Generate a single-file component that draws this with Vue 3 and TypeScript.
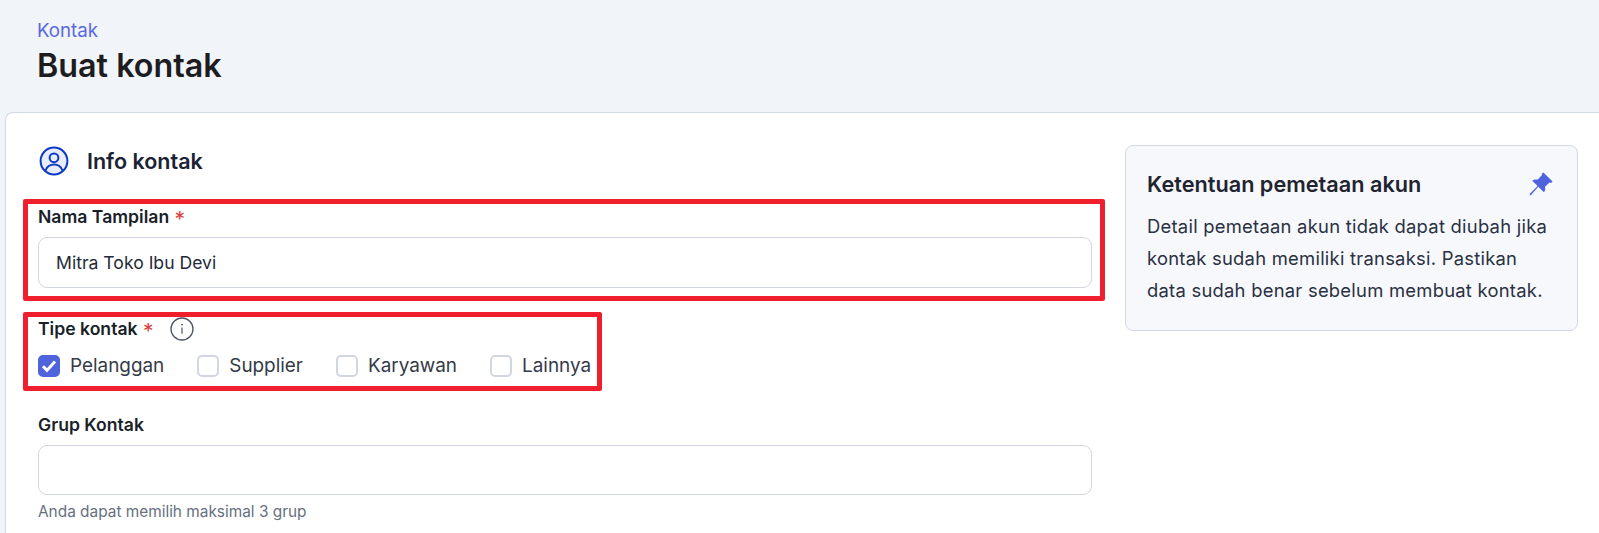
<script setup lang="ts">
const types = [
  { label: 'Pelanggan', checked: true },
  { label: 'Supplier', checked: false },
  { label: 'Karyawan', checked: false },
  { label: 'Lainnya', checked: false },
]
</script>

<template>
  <div class="page">
    <header class="head">
      <a class="crumb">Kontak</a>
      <h1 class="title">Buat kontak</h1>
    </header>
    <main class="card">
      <section class="form">
        <div class="section-head">
          <svg class="user-icon" width="30" height="30" viewBox="0 0 30 30" fill="none">
            <circle cx="15" cy="15" r="13.4" fill="#E9EDFB" stroke="#0B3BC4" stroke-width="2" />
            <circle cx="15" cy="11.8" r="4.4" stroke="#0B3BC4" stroke-width="2" />
            <path d="M6.4 24.6c1.6-4 4.8-6 8.6-6s7 2 8.6 6" stroke="#0B3BC4" stroke-width="2" />
          </svg>
          <h2 class="section-title">Info kontak</h2>
        </div>

        <div class="field field-name marked">
          <label class="label">Nama Tampilan <span class="req">*</span></label>
          <div class="input">Mitra Toko Ibu Devi</div>
        </div>

        <div class="field field-type marked marked-type">
          <div class="label type-label">
            <span class="type-text">Tipe kontak <span class="req">*</span></span>
            <svg width="24" height="24" viewBox="0 0 24 24" fill="none">
              <circle cx="12" cy="12" r="11" stroke="#4B5563" stroke-width="1.3" />
              <path d="M12 10.6v6.2" stroke="#4B5563" stroke-width="1.2" />
              <circle cx="12" cy="7.6" r="0.9" fill="#4B5563" />
            </svg>
          </div>
          <div class="checks">
            <div v-for="t in types" :key="t.label" class="check">
              <span class="box" :class="{ on: t.checked }">
                <svg v-if="t.checked" width="16" height="14" viewBox="0 0 16 14" fill="none">
                  <path d="M2 7.2 6 11.4 14 2.4" stroke="#fff" stroke-width="3" />
                </svg>
              </span>
              <span>{{ t.label }}</span>
            </div>
          </div>
        </div>

        <div class="field field-group">
          <label class="label">Grup Kontak</label>
          <div class="input input-group"></div>
          <p class="help">Anda dapat memilih maksimal 3 grup</p>
        </div>
      </section>

      <aside class="note">
        <div class="note-head">
          <h3 class="note-title">Ketentuan pemetaan akun</h3>
          <svg width="24" height="24" viewBox="0 0 24 24" fill="#4F63DD">
            <path d="M14.4.6 23.6 9.6l-1.6 1.3-1.5-.3-4.5 4.1c.6 2.2.2 4-1.1 5.5L9.3 14.7 1.6 23.4.4 22.3l8.2-8.2-5.4-5.3c1.5-1.3 3.4-1.7 5.6-1.2l4.2-4.5-.2-1.4z" />
          </svg>
        </div>
        <p class="note-text">Detail pemetaan akun tidak dapat diubah jika kontak sudah memiliki transaksi. Pastikan data sudah benar sebelum membuat kontak.</p>
      </aside>
    </main>
  </div>
</template>

<style>
html, body {
  margin: 0;
  background: #fff;
  overflow: hidden;
}
</style>

<style scoped>
.page {
  height: 533px;
  overflow: hidden;
  background: #f1f4f9;
  font-family: Inter, "Liberation Sans", sans-serif;
  color: #1f2430;
}
.head {
  height: 112px;
  box-sizing: border-box;
  padding: 20px 0 0 37px;
}
.crumb {
  display: block;
  font-size: 18.7px;
  line-height: 21px;
  color: #5b68e4;
}
.title {
  margin: 5px 0 0;
  font-size: 32.3px;
  line-height: 40px;
  font-weight: 600;
  color: #1d1d1f;
}
.card {
  margin-left: 5px;
  height: 421px;
  box-sizing: border-box;
  padding: 32px 20px 0 32px;
  background: #fff;
  border: 1px solid #d3d9e4;
  border-right: 0;
  border-bottom: 0;
  border-top-left-radius: 8px;
  display: flex;
  gap: 33px;
  align-items: flex-start;
}
.form {
  width: 1054px;
  flex: none;
}
.section-head {
  display: flex;
  align-items: center;
  gap: 18px;
  height: 32px;
}
.user-icon {
  flex: none;
  margin-left: 1px;
}
.section-title {
  margin: 0;
  font-size: 21.5px;
  line-height: 28px;
  font-weight: 600;
  color: #1b2233;
}
.field {
  position: relative;
}
.marked::after {
  content: "";
  position: absolute;
  left: -15px;
  right: -13px;
  top: -8px;
  bottom: -13px;
  border: 5px solid #f01f2d;
  border-radius: 2px;
  pointer-events: none;
}
.marked-type::after {
  right: auto;
  width: 569px;
  top: -6px;
  bottom: -14px;
}
.field-name {
  margin-top: 30px;
}
.field-type {
  margin-top: 30px;
}
.field-group {
  margin-top: 38px;
}
.label {
  display: block;
  height: 20px;
  font-size: 17.6px;
  line-height: 20px;
  font-weight: 600;
  color: #1a1f2a;
}
.req {
  color: #dc3c3c;
  font-size: 21px;
  line-height: 1;
  font-weight: 400;
  margin-left: 1px;
  vertical-align: -4px;
}
.input {
  margin-top: 10px;
  height: 51px;
  box-sizing: border-box;
  border: 1px solid #d2d6e2;
  border-radius: 9px;
  padding: 0 17px;
  display: flex;
  align-items: center;
  font-size: 17.6px;
  color: #1f2a3a;
}
.input-group {
  height: 50px;
}
.type-label {
  display: flex;
  align-items: center;
  gap: 16px;
  height: 22px;
}
.type-text {
  height: 20px;
}
.checks {
  display: flex;
  gap: 33px;
  margin-top: 15px;
}
.check {
  display: flex;
  align-items: center;
  gap: 10px;
  font-size: 18.9px;
  line-height: 22px;
  color: #333a48;
}
.box {
  width: 22px;
  height: 22px;
  box-sizing: border-box;
  border: 2px solid #d2d6e2;
  border-radius: 5px;
  display: flex;
  align-items: center;
  justify-content: center;
}
.box.on {
  background: #4f63dd;
  border-color: #4f63dd;
}
.help {
  margin: 8px 0 0;
  font-size: 15.4px;
  line-height: 18px;
  color: #667080;
}
.note {
  width: 453px;
  height: 186px;
  box-sizing: border-box;
  flex: none;
  background: #f7f8fb;
  border: 1px solid #d3d9e4;
  border-radius: 8px;
  padding: 24px 24px 0 21px;
}
.note-head {
  display: flex;
  justify-content: space-between;
  align-items: center;
  height: 28px;
}
.note-title {
  margin: 0;
  font-size: 21.7px;
  line-height: 28px;
  font-weight: 600;
  color: #1f2430;
}
.note-text {
  margin: 12px 0 0;
  font-size: 18.4px;
  line-height: 32px;
  letter-spacing: 0.25px;
  color: #2a3142;
}
</style>
